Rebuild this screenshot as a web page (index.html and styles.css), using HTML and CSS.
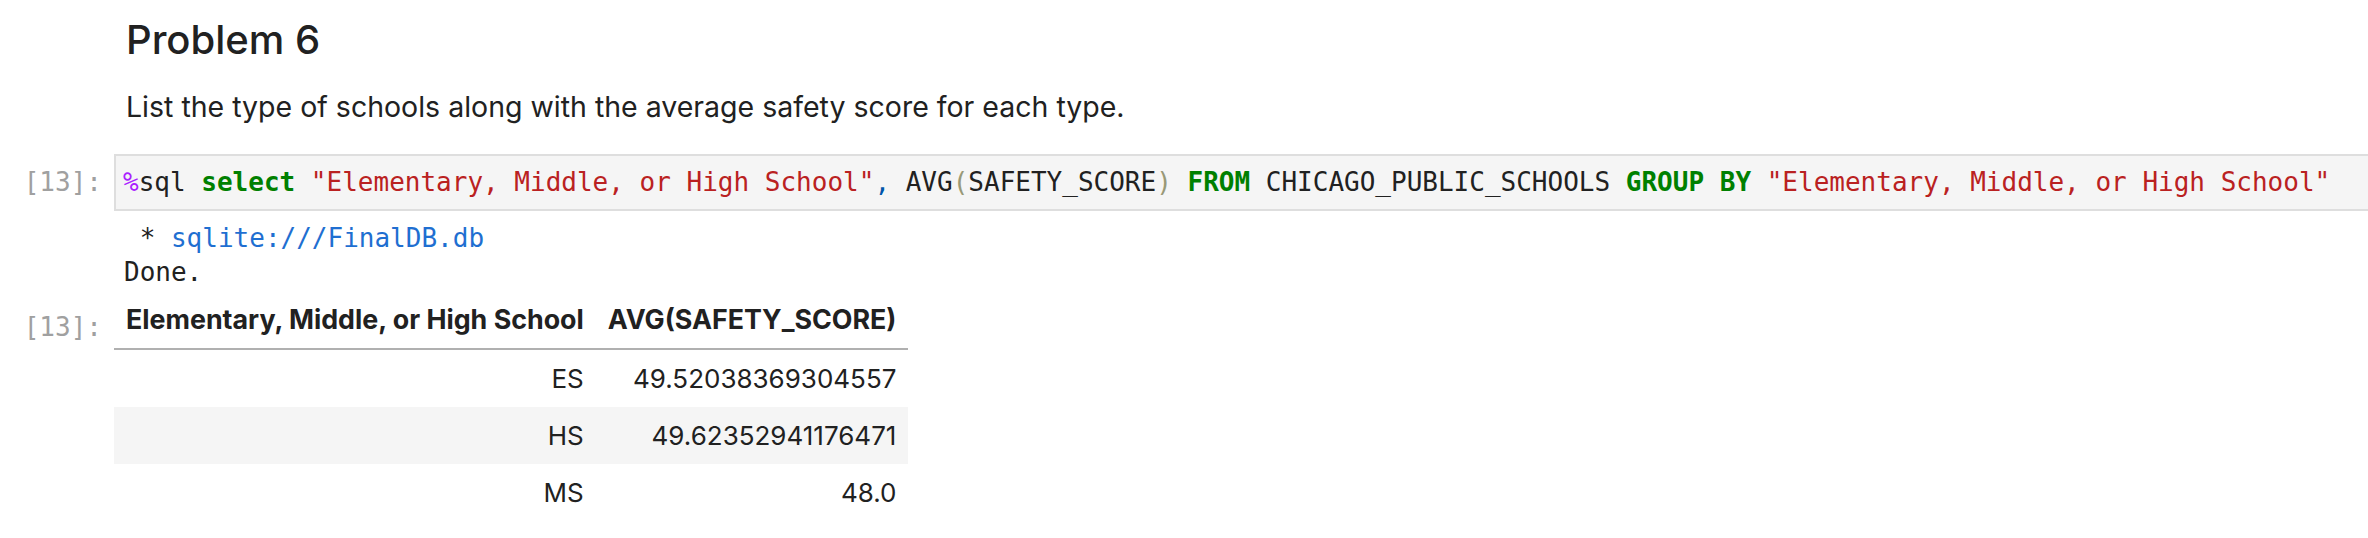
FILE: index.html
```html
<!DOCTYPE html>
<html lang="en">
<head>
<meta charset="utf-8">
<title>Problem 6</title>
<link rel="stylesheet" href="styles.css">
</head>
<body>
<div class="notebook">
  <div class="cell">
    <div class="row">
      <div class="prompt"></div>
      <div class="md-body">
        <h2 class="md-h2">Problem 6</h2>
        <p class="md-p">List the type of schools along with the average safety score for each type.</p>
      </div>
    </div>
  </div>

  <div class="cell code-cell">
    <div class="row baseline">
      <div class="prompt">[13]:</div>
      <div class="editor"><pre class="code"><span class="c-magic">%</span>sql <span class="c-kw">select</span> <span class="c-str">"Elementary, Middle, or High School"</span><span class="c-punct">,</span> AVG<span class="c-br">(</span>SAFETY_SCORE<span class="c-br">)</span> <span class="c-kw">FROM</span> CHICAGO_PUBLIC_SCHOOLS <span class="c-kw">GROUP</span> <span class="c-kw">BY</span> <span class="c-str">"Elementary, Middle, or High School"</span></pre></div>
    </div>
    <div class="row">
      <div class="prompt"></div>
      <pre class="stream"> * <span class="link">sqlite:///FinalDB.db</span>
Done.</pre>
    </div>
    <div class="row baseline">
      <div class="prompt">[13]:</div>
      <div class="html-out">
        <table class="df">
          <thead>
            <tr><th>Elementary, Middle, or High School</th><th>AVG(SAFETY_SCORE)</th></tr>
          </thead>
          <tbody>
            <tr><td>ES</td><td>49.52038369304557</td></tr>
            <tr><td>HS</td><td>49.62352941176471</td></tr>
            <tr><td>MS</td><td>48.0</td></tr>
          </tbody>
        </table>
      </div>
    </div>
  </div>
</div>
</body>
</html>
```
FILE: styles.css
```css
html, body {
  margin: 0;
  padding: 0;
  background: #ffffff;
  overflow: hidden;
}

body {
  font-family: Inter, "Noto Sans", "Liberation Sans", sans-serif;
  color: #212121;
}

.notebook {
  display: flex;
  flex-direction: column;
  width: calc(100% + 40px);
}

.row {
  display: flex;
  align-items: flex-start;
}

.row.baseline {
  align-items: baseline;
}

.prompt {
  flex: 0 0 114px;
  box-sizing: border-box;
  padding-right: 12px;
  text-align: right;
  font-family: "DejaVu Sans Mono", "Liberation Mono", monospace;
  font-size: 26px;
  line-height: 34px;
  color: #a0a0a0;
  white-space: pre;
}

.md-body {
  padding-left: 12px;
}

.md-h2 {
  margin: 16px 0 0 0;
  font-size: 40px;
  line-height: 48px;
  font-weight: 500;
  color: #212121;
}

.md-p {
  margin: 25px 0 0 0;
  font-size: 28.5px;
  line-height: 36px;
}

.code-cell {
  margin-top: 29px;
}

.editor {
  flex: 1 1 auto;
  background: #f5f5f5;
  border: 2px solid #dedede;
  padding: 9px 8px 10px 7px;
}

.code, .stream {
  margin: 0;
  font-family: "DejaVu Sans Mono", "Liberation Mono", monospace;
  font-size: 26px;
  line-height: 34px;
  color: #212121;
  white-space: pre;
}

.c-magic { color: #aa22ff; }
.c-kw { color: #008000; font-weight: bold; }
.c-str { color: #ba2121; }
.c-punct { color: #0055aa; }
.c-br { color: #999977; }

.stream {
  padding: 10px 0 0 10px;
}

.link {
  color: #1f6fd1;
}

.html-out {
  margin-top: 2px;
}

.df {
  border-collapse: collapse;
  border-spacing: 0;
  font-size: 26px;
  color: #212121;
}

.df th, .df td {
  padding: 12px;
  line-height: 33px;
  text-align: right;
  white-space: nowrap;
}

.df th {
  font-weight: bold;
  font-size: 26.8px;
}

.df thead {
  border-bottom: 2px solid #b0b0b0;
}

.df tbody tr:nth-child(even) {
  background: #f5f5f5;
}
```
